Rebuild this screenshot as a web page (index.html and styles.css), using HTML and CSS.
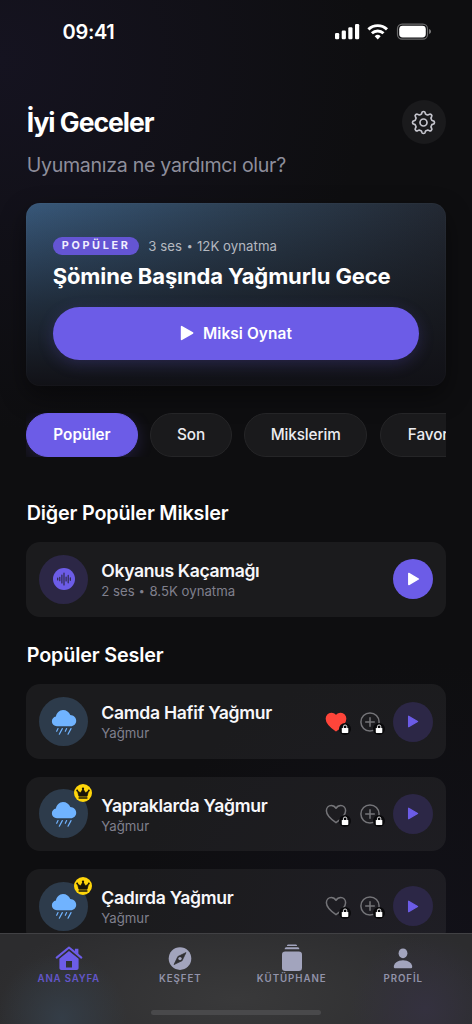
FILE: index.html
```html
<!DOCTYPE html>
<html lang="tr">
<head>
<meta charset="utf-8">
<title>İyi Geceler</title>
<link rel="stylesheet" href="styles.css">
</head>
<body>
<svg class="defs" aria-hidden="true">
  <symbol id="play" viewBox="0 0 14 16"><path d="M1.6 1.6v12.8L12.6 8z" fill="currentColor" stroke="currentColor" stroke-width="1.6" stroke-linejoin="round"/></symbol>
  <symbol id="heart" viewBox="0 0 22 20"><path d="M11 18.7C7.6 16.3 1.4 11.6 1.4 6.7 1.4 3.6 3.6 1.4 6.2 1.4c2.200 0 3.800 1.100 4.800 2.900 1-1.800 2.600-2.900 4.800-2.900 2.600 0 4.800 2.200 4.800 5.300 0 4.900-6.200 9.600-9.600 12z" stroke-linejoin="round"/></symbol>
  <symbol id="plus" viewBox="0 0 20 20"><path d="M10 .9a9.100 9.100 0 1 0 0 18.200A9.100 9.100 0 0 0 10 .9zM10 5.700v8.600M5.700 10h8.600" fill="none" stroke="currentColor" stroke-width="1.500" stroke-linecap="round"/></symbol>
  <symbol id="lock" viewBox="0 0 12 12"><circle cx="6" cy="6" r="6" fill="#09090b"/><rect x="2.800" y="4.900" width="6.500" height="5.100" rx=".7" fill="#fff"/><path d="M4.400 5.200V3.700a1.700 1.700 0 0 1 3.400 0v1.500" fill="none" stroke="#fff" stroke-width=".9"/></symbol>
  <symbol id="rain" viewBox="0 0 26 26"><path d="M6 17.200C3 17.200.9 15 .9 12.300c0-2.400 1.700-4.400 4-4.800C5.500 4 8.300 1 12 1c3.300 0 6.200 2 7.300 5.100 3.300.2 5.900 2.500 5.900 5.600 0 3.100-2.400 5.500-5.500 5.500z" fill="#70b3ff"/><path d="M7 19.600l-1.300 2.700M11.300 19.600l-3 5.600M15.600 19.600l-1.300 2.700M20 19.600l-3 5.600" stroke="#70b3ff" stroke-width="1.200" stroke-linecap="round"/></symbol>
  <symbol id="crown" viewBox="0 0 18 18"><circle cx="9" cy="9" r="9" fill="#ffd60a"/><path d="M4.900 12.200L3.500 7l3 1.800L9 5l2.500 3.800 3-1.800-1.400 5.200z" fill="#171408" stroke="#171408" stroke-width=".7" stroke-linejoin="round"/><circle cx="3.200" cy="6.500" r="1" fill="#171408"/><circle cx="9" cy="4.700" r="1.150" fill="#171408"/><circle cx="14.800" cy="6.500" r="1" fill="#171408"/><path d="M5.100 14.100h7.800" stroke="#171408" stroke-width="1.500" stroke-linecap="round"/></symbol>
</svg>
<div class="screen">
  <div class="status">
    <span class="time">09:41</span>
    <svg class="signals" width="97" height="18" viewBox="0 0 97 18">
      <g fill="#fff"><rect x="0" y="10" width="4.200" height="6.300" rx="1.200"/><rect x="6.700" y="7.500" width="4.200" height="8.800" rx="1.200"/><rect x="13.300" y="4.300" width="4.200" height="12" rx="1.200"/><rect x="20" y="1" width="4.200" height="15.300" rx="1.200"/></g>
      <g fill="none" stroke="#fff" stroke-width="2.900"><path d="M33.400 6.400a13.300 13.300 0 0 1 18.600 0"/><path d="M36.900 10.300a8.300 8.300 0 0 1 11.600 0"/></g><path d="M42.700 16.400l-3-3.100a4.300 4.300 0 0 1 6 0z" fill="#fff"/>
      <rect x="62.500" y="1.100" width="30" height="15" rx="4.600" fill="none" stroke="#fff" stroke-opacity=".38" stroke-width="1.200"/><rect x="64.200" y="2.800" width="26.600" height="11.600" rx="3.400" fill="#fff"/><path d="M94.200 6v5c1.100-.4 1.700-1.300 1.700-2.500s-.6-2.100-1.700-2.500z" fill="#fff" fill-opacity=".5"/>
    </svg>
  </div>
  <main class="content">
    <header class="header">
      <h1 class="greeting">İyi Geceler</h1>
      <div class="gear"><svg width="25" height="25" viewBox="0 0 25 25" fill="none" stroke="#c4c4cc" stroke-width="1.700" stroke-linejoin="round" stroke-linecap="round"><circle cx="12.500" cy="12.500" r="3.500"/><path d="M10.200 4.200Q10.700 3.800 10.800 2.800Q11 1.500 12.500 1.500Q14 1.500 14.200 2.800Q14.300 3.800 14.800 4.200Q15.900 4.600 16.740 5.010Q17.400 5.080 18.170 4.430Q19.220 3.660 20.280 4.720Q21.340 5.780 20.570 6.830Q19.920 7.600 19.990 8.260Q20.400 9.100 20.800 10.200Q21.200 10.700 22.200 10.800Q23.500 11 23.500 12.500Q23.500 14 22.200 14.200Q21.200 14.300 20.800 14.800Q20.400 15.900 19.990 16.740Q19.920 17.400 20.570 18.170Q21.340 19.220 20.280 20.280Q19.220 21.340 18.170 20.570Q17.400 19.920 16.740 19.990Q15.900 20.400 14.800 20.800Q14.300 21.200 14.200 22.200Q14 23.500 12.500 23.500Q11 23.500 10.800 22.200Q10.700 21.200 10.200 20.800Q9.100 20.400 8.260 19.990Q7.600 19.920 6.830 20.570Q5.780 21.340 4.720 20.280Q3.660 19.220 4.430 18.170Q5.080 17.400 5.010 16.740Q4.600 15.900 4.200 14.800Q3.800 14.300 2.800 14.200Q1.500 14 1.500 12.500Q1.500 11 2.800 10.800Q3.800 10.700 4.200 10.200Q4.600 9.100 5.010 8.260Q5.080 7.600 4.430 6.830Q3.660 5.780 4.720 4.720Q5.780 3.660 6.830 4.430Q7.600 5.080 8.260 5.010Q9.100 4.600 10.200 4.200z"/></svg></div>
    </header>
    <p class="question">Uyumanıza ne yardımcı olur?</p>
    <section class="hero">
      <div class="hero-meta"><span class="badge">POPÜLER</span><span class="hero-info">3 ses <span class="dot">•</span> 12K oynatma</span></div>
      <h2 class="hero-title">Şömine Başında Yağmurlu Gece</h2>
      <div class="hero-button"><svg width="14" height="16"><use href="#play"/></svg><span>Miksi Oynat</span></div>
    </section>
    <nav class="chips"><span class="chip chip-on">Popüler</span><span class="chip chip-son">Son</span><span class="chip chip-mine">Mikslerim</span><span class="chip chip-fav">Favoriler</span></nav>
    <h3 class="section mixes">Diğer Popüler Miksler</h3>
    <article class="card">
      <div class="avatar mix"><svg width="22" height="22" viewBox="0 0 22 22"><circle cx="11" cy="11" r="11" fill="#6c5ce7"/><path d="M4.700 10v2M6.800 9.300v3.400M8.900 7v8M11 5v12M13.100 9v4M15.200 7.200v7.600M17.300 9.700v2.600" stroke="#2c2746" stroke-width="1.150" stroke-linecap="round"/></svg></div>
      <div class="info"><div class="name n0">Okyanus Kaçamağı</div><div class="sub s0">2 ses <span class="dot">•</span> 8.5K oynatma</div></div>
      <div class="play play-on"><svg width="13" height="14"><use href="#play"/></svg></div>
    </article>
    <h3 class="section sounds">Popüler Sesler</h3>
    <div class="list">
      <article class="card">
        <div class="avatar"><svg width="26" height="26"><use href="#rain"/></svg></div>
        <div class="info"><div class="name">Camda Hafif Yağmur</div><div class="sub">Yağmur</div></div>
        <div class="action liked"><svg width="22" height="20"><use href="#heart"/></svg><svg class="lock" width="12" height="12"><use href="#lock"/></svg></div>
        <div class="action add"><svg width="20" height="20"><use href="#plus"/></svg><svg class="lock" width="12" height="12"><use href="#lock"/></svg></div>
        <div class="play"><svg width="12" height="13"><use href="#play"/></svg></div>
      </article>
      <article class="card">
        <div class="avatar"><svg width="26" height="26"><use href="#rain"/></svg><svg class="crown" width="18" height="18"><use href="#crown"/></svg></div>
        <div class="info"><div class="name">Yapraklarda Yağmur</div><div class="sub">Yağmur</div></div>
        <div class="action"><svg width="22" height="20"><use href="#heart"/></svg><svg class="lock" width="12" height="12"><use href="#lock"/></svg></div>
        <div class="action add"><svg width="20" height="20"><use href="#plus"/></svg><svg class="lock" width="12" height="12"><use href="#lock"/></svg></div>
        <div class="play"><svg width="12" height="13"><use href="#play"/></svg></div>
      </article>
      <article class="card">
        <div class="avatar"><svg width="26" height="26"><use href="#rain"/></svg><svg class="crown" width="18" height="18"><use href="#crown"/></svg></div>
        <div class="info"><div class="name">Çadırda Yağmur</div><div class="sub">Yağmur</div></div>
        <div class="action"><svg width="22" height="20"><use href="#heart"/></svg><svg class="lock" width="12" height="12"><use href="#lock"/></svg></div>
        <div class="action add"><svg width="20" height="20"><use href="#plus"/></svg><svg class="lock" width="12" height="12"><use href="#lock"/></svg></div>
        <div class="play"><svg width="12" height="13"><use href="#play"/></svg></div>
      </article>
    </div>
  </main>
  <footer class="tabbar">
    <div class="tabs">
      <div class="tab tab-on"><svg width="28" height="28" viewBox="0 0 28 28"><path d="M1.700 13.600L14 3.500l12.300 10.100" fill="none" stroke="currentColor" stroke-width="2.100" stroke-linecap="round" stroke-linejoin="round"/><path d="M19.900 4.800h3.500v6l-3.500-3z" fill="currentColor"/><path fill-rule="evenodd" d="M4.400 14.800L14 7l9.600 7.800v9.200c0 1.300-.8 2-2 2H6.400c-1.200 0-2-.7-2-2zM11 17v6.500h6V17z" fill="currentColor"/></svg><span>ANA SAYFA</span></div>
      <div class="tab"><svg width="28" height="28" viewBox="0 0 28 28"><circle cx="14" cy="14.600" r="11.300" fill="currentColor"/><path d="M20 8.600l-3.900 8.100L8 20.600l3.900-8.100z" fill="#303033" stroke="#303033" stroke-width=".7" stroke-linejoin="round"/><circle cx="14" cy="14.600" r="1.700" fill="currentColor"/></svg><span>KEŞFET</span></div>
      <div class="tab"><svg width="28" height="28" viewBox="0 0 28 28"><rect x="4" y="7.400" width="20" height="19.600" rx="3.200" fill="currentColor"/><path d="M6.700 4.700c.4-1 1-1.400 2-1.400h10.600c1 0 1.600.4 2 1.400v.6H6.700zM9 1.600C9.300.8 9.700.5 10.500.5h7c.8 0 1.200.3 1.500 1.100v.5H9z" fill="currentColor"/></svg><span>KÜTÜPHANE</span></div>
      <div class="tab"><svg width="28" height="28" viewBox="0 0 28 28"><ellipse cx="14" cy="9.300" rx="4.400" ry="4.900" fill="currentColor"/><path d="M4.800 22.700c0-3.200 3.600-6.500 9.200-6.500s9.200 3.300 9.200 6.500c0 1-.6 1.500-1.700 1.500h-15c-1.100 0-1.700-.5-1.700-1.500z" fill="currentColor"/></svg><span>PROFİL</span></div>
    </div>
    <div class="home-bar"></div>
  </footer>
</div>
</body>
</html>
```

FILE: styles.css
```css
* { box-sizing: border-box; margin: 0; }
body { background: #0e0e10; font-family: Inter, "Liberation Sans", sans-serif; color: #fff; }
.defs { position: absolute; width: 0; height: 0; }
.screen {
  width: 472px; height: 1024px; overflow: hidden; display: flex; flex-direction: column; position: relative;
  background: radial-gradient(circle 370px at 0 60px, #151320, #0e0e1000), radial-gradient(circle 300px at 420px 960px, #121119, #0e0e1000), #0e0e10;
}
svg { display: block; flex: none; }
.status { height: 64px; flex: none; display: flex; justify-content: space-between; padding: 0 40px 0 62.500px; }
.time { font-size: 20px; font-weight: 600; line-height: 24px; padding-top: 20px; letter-spacing: -.3px; }
.signals { margin-top: 23px; }
.content { flex: 1; min-height: 0; overflow: hidden; padding: 36px 26.300px 0; }
.header { display: flex; align-items: center; justify-content: space-between; height: 44px; }
.greeting { font-size: 26.500px; font-weight: 750; line-height: 32px; letter-spacing: -1px; padding-left: .4px; }
.gear { width: 44px; height: 44px; border-radius: 50%; background: #1a1a1c; display: flex; align-items: center; justify-content: center; }
.question { font-size: 19.600px; line-height: 24px; margin-top: 8.500px; padding-left: .4px; color: #8e8e9b; letter-spacing: -.3px; white-space: nowrap; }
.hero {
  margin-top: 26.500px; height: 183px; border-radius: 14px; padding: 33px 25.400px 0; border: 1px solid #ffffff05;
  background: linear-gradient(to bottom, #0e0e1000 0%, #11121699 55%, #111116 100%) border-box, linear-gradient(100deg, #38587a, #2c3e51 50%, #21252e) border-box;
  box-shadow: 0 10px 26px #00000070;
}
.hero-meta { display: flex; align-items: center; gap: 9px; height: 18px; }
.badge { width: 86.500px; height: 18px; border-radius: 9px; background: #6455d3; font-size: 10.800px; font-weight: 700; letter-spacing: 2.700px; line-height: 18px; padding-left: 9px; color: #f1efff; }
.hero-info { font-size: 13.200px; color: #b5b9c0; white-space: nowrap; letter-spacing: .05px; }
.dot { display: inline-block; transform: scale(.8); }
.hero-title { font-size: 22px; font-weight: 700; line-height: 28px; margin-top: 7px; letter-spacing: -.12px; white-space: nowrap; }
.hero-button { margin-top: 16.500px; height: 53px; border-radius: 26.500px; background: #6c5ce7; display: flex; align-items: center; justify-content: center; gap: 9px; font-size: 15.400px; font-weight: 600; letter-spacing: .1px; box-shadow: 0 4px 16px #6c5ce738; }
.chips { margin-top: 26.500px; height: 44.500px; display: flex; gap: 12.700px; overflow: hidden; }
.chip { flex: none; height: 44.500px; border-radius: 22.500px; border: 1px solid #252527; background: #1a1a1c; display: flex; align-items: center; justify-content: center; font-size: 15.300px; font-weight: 500; letter-spacing: -.1px; color: #ececf0; }
.chip-on { width: 111.300px; background: #6c5ce7; border-color: #6c5ce7; font-weight: 600; letter-spacing: .05px; color: #fff; box-shadow: 0 4px 16px #6c5ce738; }
.chip-son { width: 81.500px; }
.chip-mine { width: 122.500px; }
.chip-fav { width: 119px; }
.section { font-size: 19.800px; font-weight: 600; line-height: 24px; white-space: nowrap; padding-left: .4px; }
.mixes { margin-top: 43.600px; letter-spacing: -.18px; }
.sounds { margin-top: 26px; letter-spacing: -.15px; }
.section + .card, .list { margin-top: 17.600px; }
.list { display: flex; flex-direction: column; gap: 17.900px; }
.card { flex: none; height: 74.500px; border-radius: 14px; background: #ffffff0e; display: flex; align-items: center; padding: 0 13.200px 0 13px; }
.avatar { position: relative; width: 49px; height: 49px; border-radius: 50%; background: #2d3b4b; display: flex; align-items: center; justify-content: center; flex: none; }
.mix { background: #2c2746; }
.crown { position: absolute; left: 35px; top: -5px; }
.info { flex: 1; min-width: 0; margin-left: 13px; padding-top: 1.600px; white-space: nowrap; }
.name { font-size: 17.600px; font-weight: 580; line-height: 22px; color: #f7f7fa; letter-spacing: -.3px; }
.n0 { letter-spacing: -.38px; }
.sub { font-size: 13.200px; line-height: 18px; color: #80808d; }
.s0 { letter-spacing: 0; }
.play { width: 40px; height: 40px; border-radius: 50%; background: #2c2746; color: #6c5ce7; display: flex; align-items: center; justify-content: center; padding-left: 1px; }
.play-on { background: #6c5ce7; color: #fff; }
.action { position: relative; margin-right: 13.500px; color: #747478; }
.action > svg:first-child { fill: none; stroke: currentColor; stroke-width: 1.500; }
.add { margin-right: 12.500px; }
.liked > svg:first-child { fill: #ff453a; stroke: #ff453a; }
.lock { position: absolute; right: -4.500px; top: 11px; }
.tabbar { height: 91px; flex: none; border-top: 1px solid #414144; background: radial-gradient(circle 65px at 62px 84px, #343d47, #343d4700), radial-gradient(circle 75px at 425px 75px, #34313f, #34313f00), radial-gradient(ellipse 250px 90px at 235px 65px, #39393a, #2c2c2e00), #2c2c2e; display: flex; flex-direction: column; align-items: center; }
.tabs { width: 446px; height: 76px; display: grid; grid-template-columns: repeat(4, 1fr); padding-top: 10px; }
.tab { display: flex; flex-direction: column; align-items: center; color: #a2a4bd; }
.tab span { font-size: 9.700px; line-height: 12px; font-weight: 600; letter-spacing: .95px; margin-top: 1px; color: #9293aa; }
.tab-on { color: #6c5ce7; }
.tab-on span { color: #6356ca; letter-spacing: .8px; }
.home-bar { width: 170px; height: 5px; border-radius: 3px; background: #49494b; }
```
